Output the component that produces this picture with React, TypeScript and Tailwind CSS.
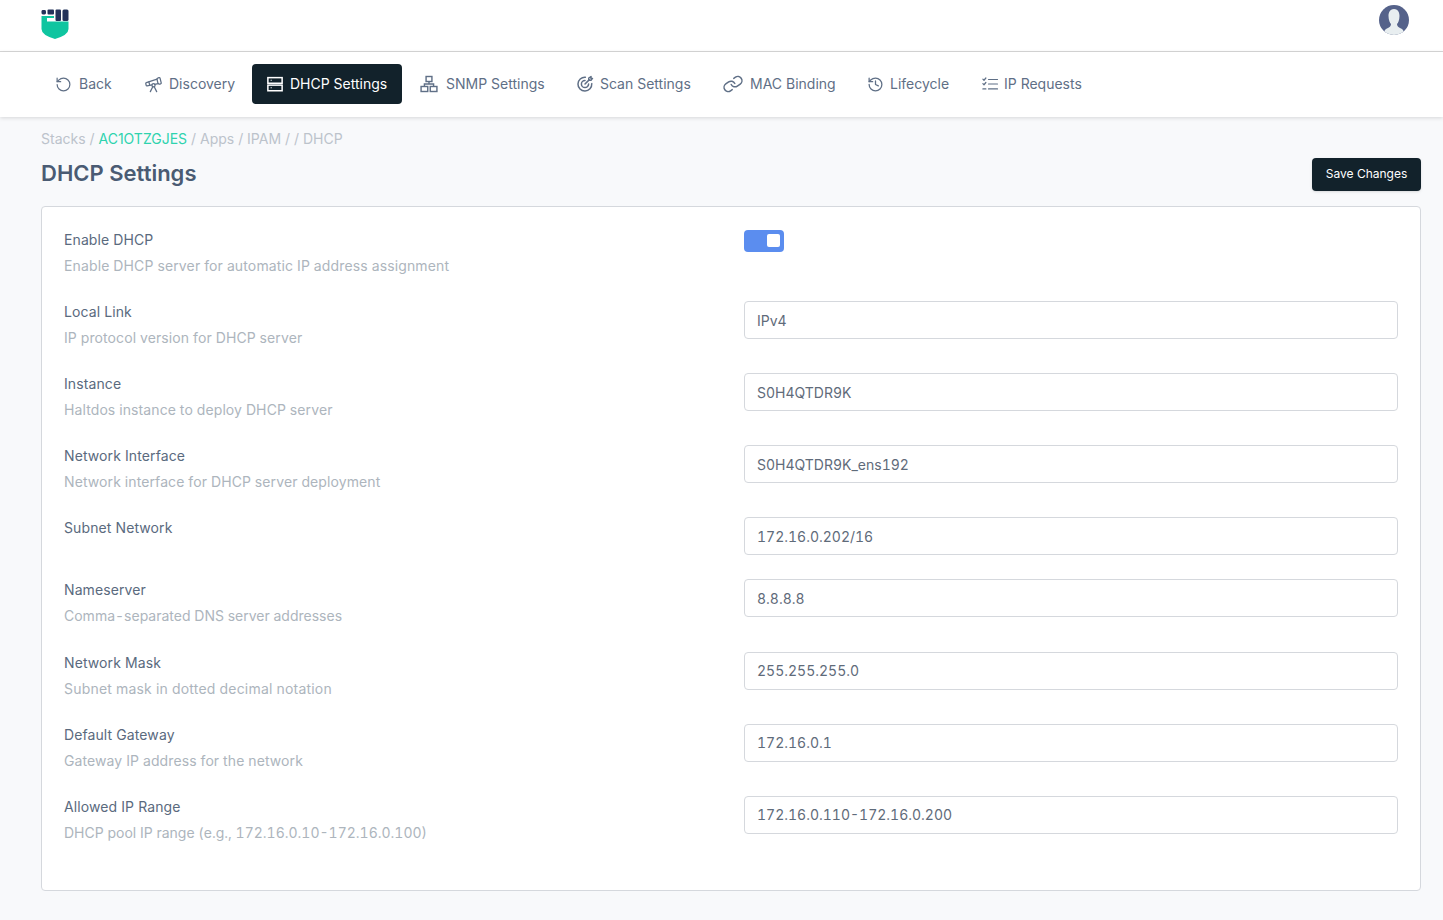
import React from "react";
import { LuHistory, LuRotateCcw, LuTelescope } from "react-icons/lu";

function Logo() {
  return (
    <svg width="28" height="30" viewBox="0 0 28 30" fill="none">
      <path d="M0.5 7 H6 V12.5 H27.5 V20 Q27.5 26 14 30 Q0.5 26 0.5 20 Z" fill="#0fc5a0" />
      <path d="M6 7 H13 V9 H6 Z" fill="#0fc5a0" />
      <rect x="0.5" y="1" width="4.5" height="4.5" rx="1.4" fill="#23325a" />
      <rect x="6.5" y="0.5" width="6.5" height="5" rx="1" fill="#23325a" />
      <rect x="14.5" y="0.5" width="5.5" height="11.5" rx="1" fill="#23325a" />
      <rect x="21.5" y="0.5" width="6" height="11.5" rx="1.5" fill="#23325a" />
    </svg>
  );
}

function Avatar() {
  return (
    <svg width="30" height="30" viewBox="0 0 30 30">
      <defs>
        <clipPath id="avatar-clip"><circle cx="15" cy="15" r="15" /></clipPath>
      </defs>
      <g clipPath="url(#avatar-clip)">
        <rect width="30" height="30" fill="#55628a" />
        <path d="M15 4 C10.5 4 9.5 8 9.5 11 C9.5 15 11 18 12 19 C12 21 11 22 8 23.5 C5 25 5 27 5 30 H25 C25 27 25 25 22 23.5 C19 22 18 21 18 19 C19 18 20.5 15 20.5 11 C20.5 8 19.5 4 15 4 Z" fill="#e8eef0" />
      </g>
    </svg>
  );
}

const iconProps = {
  width: 20, height: 20, viewBox: "0 0 24 24", fill: "none", stroke: "currentColor", strokeWidth: 1.7,
  strokeLinecap: "round" as const, strokeLinejoin: "round" as const,
};

const ServerIcon = () => (
  <svg {...iconProps} width={18} height={18} strokeWidth={2} strokeLinecap="butt" strokeLinejoin="miter">
    <rect x="2.5" y="3.5" width="19" height="7.5" /><rect x="2.5" y="13.5" width="19" height="7.5" /><path d="M6 7h2M6 17h2" strokeWidth={1} />
  </svg>
);
const SitemapIcon = () => (
  <svg {...iconProps} strokeLinejoin="miter" strokeLinecap="butt">
    <rect x="8.5" y="3" width="7" height="6" /><rect x="2.5" y="15" width="8" height="6" /><rect x="13.5" y="15" width="8" height="6" /><path d="M12 9v3M6.5 15v-3h11v3" />
  </svg>
);
const TargetIcon = () => (
  <svg {...iconProps} width={18} height={18} strokeWidth={2}>
    <path d="M21 11.5A9.2 9.2 0 1 1 12.5 3" /><path d="M16.8 12A4.8 4.8 0 1 1 12 7.2" /><path d="m12 12 5.5-5.5" /><path d="M17 7V4l3-2v2.5H22L20 7Z" />
  </svg>
);
const LinkIcon = () => (
  <svg {...iconProps} strokeWidth={1.8}>
    <g transform="rotate(10 12 12)">
      <path d="M10 13a5 5 0 0 0 7.54.54l3-3a5 5 0 0 0-7.07-7.07l-1.72 1.71" />
      <path d="M14 11a5 5 0 0 0-7.54-.54l-3 3a5 5 0 0 0 7.07 7.07l1.71-1.71" />
    </g>
  </svg>
);
const ChecklistIcon = () => (
  <svg {...iconProps} width={18} height={18} strokeWidth={1.6}>
    <path d="M2.5 5.5 4 7l2.5-3M2.5 11.5 4 13l2.5-3M2.5 18.5h4M10 6h12M10 12h12M10 18.5h12" />
  </svg>
);

const tabs: { label: string; icon: React.ReactNode; active?: boolean; cls: string; iconCls: string }[] = [
  { label: "Back", icon: <LuRotateCcw size={17} strokeWidth={1.7} />, cls: "w-[89px]", iconCls: "w-[24px]" },
  { label: "Discovery", icon: <LuTelescope size={19} strokeWidth={1.6} />, cls: "w-[122px]", iconCls: "w-[25px]" },
  { label: "DHCP Settings", icon: <ServerIcon />, active: true, cls: "w-[150px] mr-[3px]", iconCls: "w-[24px]" },
  { label: "SNMP Settings", icon: <SitemapIcon />, cls: "w-[157px]", iconCls: "w-[27px]" },
  { label: "Scan Settings", icon: <TargetIcon />, cls: "w-[147px]", iconCls: "w-[24px]" },
  { label: "MAC Binding", icon: <LinkIcon />, cls: "w-[144px]", iconCls: "w-[27px]" },
  { label: "Lifecycle", icon: <LuHistory size={17} strokeWidth={1.8} />, cls: "w-[114px]", iconCls: "w-[23px]" },
  { label: "IP Requests", icon: <ChecklistIcon />, cls: "w-[136px]", iconCls: "w-[23px]" },
];

const rows = [
  { label: "Local Link", help: "IP protocol version for DHCP server", value: "IPv4", cls: "h-[72px]", valueCls: "", helpCls: "tracking-[0.1px]" },
  { label: "Instance", help: "Haltdos instance to deploy DHCP server", value: "S0H4QTDR9K", cls: "h-[72px]", valueCls: "", helpCls: "tracking-[0.1px]" },
  { label: "Network Interface", help: "Network interface for DHCP server deployment", value: "S0H4QTDR9K_ens192", cls: "h-[72px]", valueCls: "", helpCls: "tracking-[0.1px]" },
  { label: "Subnet Network", help: "", value: "172.16.0.202/16", cls: "h-[62px]", valueCls: "", helpCls: "" },
  { label: "Nameserver", help: "Comma-separated DNS server addresses", value: "8.8.8.8", cls: "h-[73px]", valueCls: "", helpCls: "" },
  { label: "Network Mask", help: "Subnet mask in dotted decimal notation", value: "255.255.255.0", cls: "h-[72px]", valueCls: "pb-[1px]", helpCls: "tracking-[0.2px]" },
  { label: "Default Gateway", help: "Gateway IP address for the network", value: "172.16.0.1", cls: "h-[72px]", valueCls: "pb-[1px]", helpCls: "tracking-[0.1px]" },
  { label: "Allowed IP Range", help: "DHCP pool IP range (e.g., 172.16.0.10-172.16.0.100)", value: "172.16.0.110-172.16.0.200", cls: "h-[72px]", valueCls: "pb-[1px]", helpCls: "" },
];

function Row({ label, help, helpCls, children, cls }: { label: string; help?: string; helpCls: string; children: React.ReactNode; cls: string }) {
  return (
    <div className={`flex ${cls}`}>
      <div className="w-[680px] shrink-0">
        <div className="text-[14px] leading-[21px] text-[#5a6a7e] tracking-[0.1px]">{label}</div>
        {help ? <div className={`text-[14px] leading-[21px] mt-[5px] text-[#adb5bd] tabular-nums ${helpCls}`}>{help}</div> : null}
      </div>
      <div className="flex-1">{children}</div>
    </div>
  );
}

export default function App() {
  return (
    <div className="min-h-[920px] bg-[#f8f9fb] font-['Inter',sans-serif]">
      <header className="h-[52px] bg-white border-b border-[#d8d8d8] flex items-center justify-between pl-[41px] pr-[34px]">
        <div className="mt-[-3px]"><Logo /></div>
        <div className="mt-[-12px]"><Avatar /></div>
      </header>
      <nav className="h-[65px] bg-white shadow-[0_1px_4px_rgba(0,0,0,0.14)] flex items-center pl-[41px] pb-[1px] relative">
        {tabs.map((t) => (
          <div key={t.label} className={`${t.cls} shrink-0 h-10 flex items-center pl-[14px] rounded text-[14px] ${t.active ? "bg-[#12222b] text-white" : "text-[#5f6f86]"}`}>
            <span className={`${t.iconCls} shrink-0 flex items-center`}>{t.icon}</span>
            <span className="pb-[2px]">{t.label}</span>
          </div>
        ))}
      </nav>
      <main className="pr-[22px] pl-[41px]">
        <div className="pt-[11px] text-[14px] leading-[21px] text-[#bcc3cb]">
          Stacks / <span className="text-[#2ed3ae]">AC1OTZGJES</span> / Apps / IPAM / / DHCP
        </div>
        <div className="flex items-center justify-between mt-[9px] h-[33px]">
          <h1 className="text-[22px] leading-[30px] font-semibold text-[#4a5b73] mt-[-3px]">DHCP Settings</h1>
          <button className="h-[33px] w-[109px] rounded bg-[#12222b] text-white text-[12px] pb-[2px] shadow-sm">Save Changes</button>
        </div>
        <section className="mt-[15px] h-[685px] bg-white border border-[#d5d8dd] rounded pt-[22px] px-[22px]">
          <Row label="Enable DHCP" help="Enable DHCP server for automatic IP address assignment" helpCls="tracking-[0.13px]" cls="h-[72px]">
            <div className="w-10 h-[22px] mt-[1px] rounded bg-[#5b8def] flex justify-end pr-[4px] pt-[4px]">
              <div className="w-[13px] h-[13px] rounded-[2px] bg-white" />
            </div>
          </Row>
          {rows.map((r) => (
            <Row key={r.label} label={r.label} help={r.help} helpCls={r.helpCls} cls={r.cls}>
              <div className={`h-[38px] border border-[#d5d8dd] rounded flex items-center px-3 text-[14px] text-[#5f6b7a] bg-white tabular-nums ${r.valueCls}`}>{r.value}</div>
            </Row>
          ))}
        </section>
      </main>
    </div>
  );
}
